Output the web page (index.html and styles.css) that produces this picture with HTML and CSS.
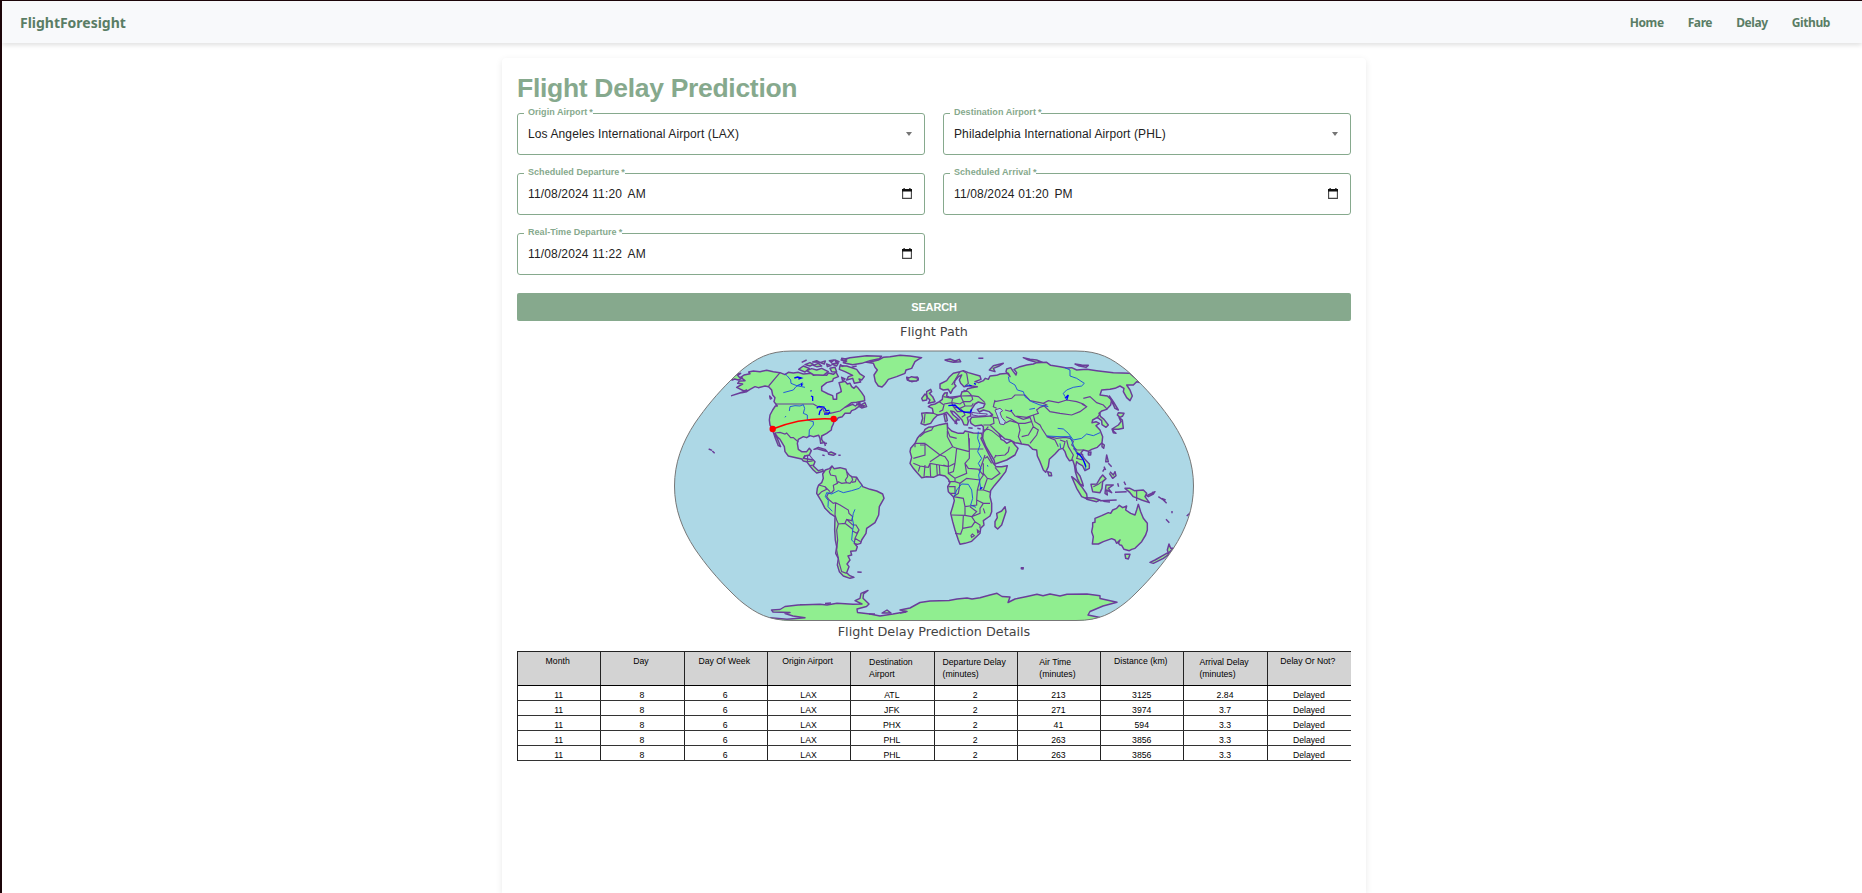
FILE: index.html
```html
<!DOCTYPE html>
<html lang="en">
<head>
<meta charset="utf-8">
<title>FlightForesight</title>
<link rel="stylesheet" href="styles.css">
</head>
<body>
<header class="navbar">
  <a class="brand">FlightForesight</a>
  <nav class="links"><a>Home</a><a>Fare</a><a>Delay</a><a>Github</a></nav>
</header>
<main class="card">
  <h1 class="title">Flight Delay Prediction</h1>
  <form class="form">
    <div class="field"><span class="label">Origin Airport<i>*</i></span><span class="value">Los Angeles International Airport (LAX)</span><span class="caret"></span></div>
    <div class="field"><span class="label">Destination Airport<i>*</i></span><span class="value">Philadelphia International Airport (PHL)</span><span class="caret"></span></div>
    <div class="field date"><span class="label">Scheduled Departure<i>*</i></span><span class="value">11/08/2024 11:20 <b>AM</b></span><svg class="cal" viewBox="0 0 10 11"><path d="M.6 2.500h8.800v7.900H.6z" fill="none" stroke="#444" stroke-width="1.100"/><path d="M0 1h10v2.500H0zM1.500 0h1.200v1.500H1.500zM7.300 0h1.200v1.500H7.300z" fill="#111"/></svg></div>
    <div class="field date"><span class="label">Scheduled Arrival<i>*</i></span><span class="value">11/08/2024 01:20 <b>PM</b></span><svg class="cal" viewBox="0 0 10 11"><path d="M.6 2.500h8.800v7.900H.6z" fill="none" stroke="#444" stroke-width="1.100"/><path d="M0 1h10v2.500H0zM1.500 0h1.200v1.500H1.500zM7.300 0h1.200v1.500H7.300z" fill="#111"/></svg></div>
    <div class="field date"><span class="label">Real-Time Departure<i>*</i></span><span class="value">11/08/2024 11:22 <b>AM</b></span><svg class="cal" viewBox="0 0 10 11"><path d="M.6 2.500h8.800v7.900H.6z" fill="none" stroke="#444" stroke-width="1.100"/><path d="M0 1h10v2.500H0zM1.500 0h1.200v1.500H1.500zM7.300 0h1.200v1.500H7.300z" fill="#111"/></svg></div>
    <button type="button" class="search">SEARCH</button>
  </form>
  <h2 class="caption">Flight Path</h2>
  <svg class="map" viewBox="670 346 528 278">
    <defs>
      <path id="globe" d="M792 351C768 351 756 359 743 369C738 373 734 377 730 381C717 394 706 407 695 423C682 443 674.500 463 674.500 486C674.500 509 682 529 695 549C706 565 717 578 730 591C734 595 738 599 743 603C756 613 768 620.500 792 620.500H1076C1100 620.500 1112 613 1125 603C1130 599 1134 595 1138 591C1151 578 1162 565 1173 549C1186 529 1193.500 509 1193.500 486C1193.500 463 1186 443 1173 423C1162 407 1151 394 1138 381C1134 377 1130 373 1125 369C1112 359 1100 351 1076 351Z"/>
      <clipPath id="clip"><use href="#globe"/></clipPath>
    </defs>
    <use href="#globe" class="ocean"/>
    <g clip-path="url(#clip)">
      <!-- Americas -->
      <g transform="translate(670 280) scale(.33333)">
        <g class="land">
          <path d="M185 347L205 340 218 336 230 330 222 333 200 322 218 312 203 310 208 303 225 302 212 292 222 285 240 281 236 276 250 273 270 275 290 271 310 275 330 278 345 284 355 277 370 279 385 277 400 282 425 280 430 286 445 283 470 286 475 279 490 283 498 276 505 290 490 296 488 303 470 308 455 320 455 332 475 342 488 347 490 358 500 358 500 342 514 335 512 325 507 308 525 304 532 312 540 310 545 320 552 325 558 318 565 325 575 338 583 350 584 362 560 367 545 368 525 382 548 373 556 378 570 367 570 376 585 368 590 380 575 384 567 379 555 388 545 392 540 400 525 400 517 410 505 413 500 420 492 423 490 432 485 442 484 450 470 460 455 468 455 478 461 488 452 490 450 475 446 466 430 470 420 467 410 473 400 470 385 478 382 490 385 508 395 515 410 515 418 505 424 512 418 525 405 528 400 535 430 540 435 545 430 558 445 572 458 568 460 574 440 579 430 570 420 558 410 545 400 543 395 537 378 533 355 528 345 515 343 500 330 478 322 470 315 460 326 485 332 500 325 497 316 475 310 457 308 447 300 435 298 420 300 405 308 390 316 378 322 378 312 365 315 353 308 345 305 330 296 320 285 318 265 323 255 320 240 328 230 335 215 338Z"/>
          <path d="M180 297L200 283 212 280 203 286 208 292 217 294 205 300 194 297 187 300Z"/>
          <path d="M585 246L610 250 615 262 622 270 612 285 616 305 625 318 636 321 645 312 655 298 680 290 705 280 708 270 725 265 735 245 745 238 755 233 720 228 690 226 660 230 640 232 625 240 600 246Z"/>
          <path d="M513 240L540 233 590 227 635 229 628 236 600 242 575 250 548 254 520 248 530 243Z"/>
          <path d="M510 257L530 258 560 268 570 282 583 290 575 300 567 297 572 306 553 310 548 295 530 300 535 290 548 286 525 275 508 268Z"/>
          <path d="M410 272L425 266 440 270 455 265 475 275 460 286 430 284Z"/>
          <path d="M386 268L400 258 418 265 405 276Z"/>
          <path d="M710 292L722 295 742 291 745 300 725 305 712 300Z"/>
          <path d="M405 254L420 248 430 253 420 258ZM430 256L445 250 455 258 440 260ZM428 246L440 242 450 247ZM450 248L466 243 463 252ZM470 252L483 257 472 260ZM478 242L492 240 484 247ZM485 252L505 249 500 258ZM495 240L507 245 498 247ZM515 235L530 238 520 243ZM480 265L495 262 500 276 485 275ZM515 292L525 297 518 303ZM560 372L570 377 578 382 583 377ZM299 348L305 355 301 357ZM116 507L126 511M127 513L134 520M432 508L445 502 465 508 472 515 455 510 440 506ZM475 519L483 516 497 522 490 526 476 523ZM457 525L464 527M505 526L512 526M463 485L466 498M467 488L470 492M510 253L520 260M560 258L545 262M395 247L410 240"/>
        </g>
        <path class="border" d="M330 278L296 318M316 372H430L440 378 458 385 463 396 480 400 490 398 510 393 525 382M315 459L330 457 345 462 350 459 362 473 370 473 385 486M400 535L405 526M413 527L412 545M418 525L430 540M412 545L428 543M418 557L432 555"/>
        <path class="river" d="M345 281L352 288 362 300 363 310 380 317 405 322M398 308L378 320 370 330 340 338M380 317L400 312M358 393L360 380 375 377 390 378 400 374 404 385 400 400 412 405 412 420 430 425 430 435 418 450 417 470M345 412L348 408"/>
        <path class="lake" d="M373 294L383 291 394 294 385 297M395 310V318M422 331L424 334M423 348L428 350 428 363M440 385L447 379 462 381 463 386M447 405L450 393 456 388M465 385L468 392 478 391M462 402L475 402 480 395"/>
        <!-- South America -->
        <g transform="translate(0 510)">
          <g class="land">
            <path d="M458 72L466 60 478 56 486 48 492 56 510 53 528 58 530 65 538 75 545 80 560 82 566 92 575 104 578 110 600 118 620 123 638 132 642 145 628 170 626 195 615 218 590 235 588 250 575 270 572 280 562 283 553 280 562 290 558 302 542 304 545 315 534 318 540 330 531 342 537 350 530 368 538 376 552 382 540 385 520 378 508 365 502 345 505 325 497 310 500 290 496 270 494 240 495 200 480 190 465 175 455 155 440 130 442 115 446 105 455 98 460 85Z"/>
            <path d="M562 366L575 367M465 467L485 465M390 464L420 466"/>
          </g>
          <path class="border" d="M486 48L478 65 482 75 497 78 500 90 502 100 490 106 492 120 485 128 475 130 470 140 478 150 490 160 497 158M530 65L533 80 526 90 530 98 515 100 505 95 502 100M545 80L548 90 540 100 530 98M560 82L556 95 545 97M446 105L465 110 470 118 455 125 445 135M465 110L480 125M497 158L510 165 535 180 537 190 548 200 545 212 530 208 525 220 505 222 500 210 495 195 496 175 497 158M505 222L500 240 503 270 500 300 508 340 515 365 530 370M530 208L548 225 558 225 567 240 560 250 548 243M525 220L548 238M567 240L555 265 572 275M555 265L553 280"/>
          <path class="river" d="M575 106L568 115 545 122 520 128 505 122 485 132 470 128 466 140 475 152 474 170 487 184M555 178L550 190 547 205 551 225 548 240 545 270 553 278"/>
        </g>
      </g>
      <!-- Europe, Africa, Asia, Oceania -->
      <g transform="translate(900 330) scale(.33333)">
        <g class="land">
          <path d="M65 250L80 248 100 250 97 235 85 230 92 225 105 222 118 215 127 208 128 198 134 189 142 188 140 198 150 202 165 200 182 198 186 185 198 184 203 176 215 173 232 170 208 167 192 170 182 160 178 150 185 135 175 140 165 152 163 162 168 168 158 178 152 190 145 178 130 180 120 175 120 162 140 152 147 142 160 130 180 125 190 122 205 128 240 138 243 148 225 155 236 158 250 152 256 145 265 148 270 138 290 136 300 132 325 130 330 140 318 125 320 117 332 113 340 125 348 135 350 128 342 118 360 110 380 105 400 102 410 98 440 97 452 106 480 110 500 114 515 113 530 120 560 118 590 122 615 125 640 128 690 130 722 158 710 155 700 165 680 165 690 180 697 198 690 212 680 203 670 185 672 175 660 168 645 175 630 178 605 180 600 195 622 198 635 210 632 225 620 238 605 243 597 250 602 260 612 268 625 285 618 292 606 284 605 272 592 262 578 270 576 278 588 275 598 280 588 287 600 300 608 320 606 338 592 352 575 358 565 364 550 360 543 368 552 385 568 402 568 415 555 422 548 408 535 400 530 395 527 410 530 425 540 438 548 460 550 468 540 462 532 445 526 425 523 405 518 390 508 392 500 380 495 365 488 355 478 358 465 372 448 388 445 410 437 427 430 420 420 395 412 378 410 360 398 358 385 345 365 342 345 338 330 330 315 327 298 312 303 328 312 332 320 340 335 332 345 345 354 355 345 375 320 390 285 402 282 390 270 370 258 350 248 325 250 300 250 290 245 285 225 288 213 280 210 270 215 262 240 260 270 258 278 255 268 245 250 240 238 246 232 238 250 232 255 222 235 216 225 222 212 242 212 258 202 262 205 275 202 285 192 284 186 270 172 255 162 245 152 243 160 255 178 270 168 270 170 280 162 272 150 258 140 247 128 252 112 256 100 268 92 280 75 285 63 281 68 265Z"/>
          <path d="M85 292L100 290 120 284 142 280 143 292 155 303 175 310 190 310 195 303 220 309 245 310 247 320 243 325 255 350 270 380 280 400 288 410 305 410 322 407 317 425 300 447 283 467 272 482 270 500 275 520 275 545 270 558 250 572 252 585 242 595 240 610 215 634 195 640 180 643 175 630 165 600 158 575 152 550 158 530 163 512 160 500 145 485 143 470 150 458 145 448 135 438 118 434 100 442 80 440 65 443 50 427 40 415 30 400 35 382 30 365 32 355 45 340 52 325 60 315 72 305 75 298Z"/>
          <path d="M315 530L318 545 305 585 293 597 285 590 285 575 292 563 290 550 305 543Z"/>
          <path d="M80 185L92 178 95 185 88 190 98 200 105 215 85 220 90 210 80 200ZM65 205L75 192 82 198 80 210 68 212ZM22 146L35 140 55 145 50 153 28 152Z"/>
          <path d="M443 425L453 428 455 437 447 437ZM515 440L530 452 545 470 560 492 562 507 545 500 530 475ZM558 503L580 504 600 510 590 515 560 508ZM573 463L590 462 600 445 608 435 618 446 608 455 606 475 600 488 578 485ZM618 465L640 465 625 475 635 488 620 480 622 495 615 490ZM620 375L625 395 617 395ZM612 410L617 420M625 400L635 410M630 425L640 435 645 425 648 437 638 445 628 430M608 425L614 415M606 340L613 345 611 355 606 350ZM565 368L573 366 572 375 565 375ZM600 512L650 510M610 514L630 516M653 460L656 470M645 487L680 485M675 475L690 475 703 482 730 480 740 490 735 500 748 518 725 510 700 500 690 488ZM740 497L765 485 760 492 745 500ZM775 500L790 510 800 520M785 505L797 510M816 543V550M798 568L808 578M860 558L872 548M758 485L760 492M672 455L677 465"/>
          <path d="M628 198L640 215 655 240 645 235ZM655 248L672 250 668 258 660 262 652 255ZM657 262L667 270 670 295 655 298 640 297 640 303 648 310 640 308 636 297 655 285 663 275Z"/>
          <path d="M135 90L150 87 165 93 178 88 182 95 160 97 143 93ZM235 85H250M268 120L280 107 310 100 298 108 280 115 285 125ZM370 83L390 88 410 90 428 97 410 97 385 90ZM525 102L545 105 565 106 558 112 535 107ZM132 255L136 275 142 272 138 252ZM163 278L172 282M205 293L218 295M232 295L242 297"/>
          <path d="M578 590L578 578 585 577 585 565 605 557 625 548 632 550 638 540 650 535 658 526 668 533 680 528 677 540 692 550 705 555 710 540 715 523 722 545 730 565 742 580 742 600 737 615 725 635 705 655 695 658 688 662 672 658 665 646 660 645 655 640 660 630 650 640 645 630 635 626 610 635 595 642 577 642 580 620 575 605ZM675 673L690 673 685 687 677 685ZM807 642L812 655 820 655 805 670 802 660ZM750 697L765 690 800 670 808 672 790 685 760 700ZM364 713L370 713 369 717 364 716Z"/>
        </g>
        <path class="border" d="M142 280L142 300 150 320 170 325M100 290L95 300 75 307 60 320M45 340H75V375L40 385M77 342L120 375 90 395M120 375L158 350 142 320 142 303M158 350L170 355 165 400 145 410 130 405M170 355L208 365 205 310M208 325L208 357H250M208 357V385L195 400 205 415 240 418 250 390 255 375M60 345H75M45 340V352M120 375L135 380 145 395 145 410 118 405 90 400 85 412 60 408 40 400M60 408L55 425M75 405L72 440M90 400L92 442M110 405L112 438M118 405L120 436M145 410L145 430 160 425 165 400M145 430L165 445 165 455H145M165 455L180 460 200 445 240 450 250 435 235 418M195 400L200 430 165 445M255 385L262 380 275 400M250 400L250 430 262 445 275 448 300 430 285 412M262 445L250 480 272 487M240 450L232 480 230 510 250 520 270 520M232 480L250 480M180 460L175 490 160 500M160 500L190 505 195 530 230 525 230 510M155 555L195 556 195 530M195 556L215 560 230 545 210 530M190 558L188 595 182 612 165 610M188 595L215 590 225 575 215 560 240 550 240 535 250 520M225 575L240 585 240 595M145 470H165V490L150 490M217 612L223 617 215 622 213 617ZM232 600L238 605 233 608ZM250 535L255 550"/>
        <path class="border" d="M100 250L115 256M118 215L132 225 128 240 118 245M130 200L158 205 155 218 132 222M158 205L182 198 190 215 180 222 155 218M182 198L215 197 218 208 210 215 190 215M190 215L195 228 215 228 220 220M155 218L160 230 180 235 195 228M160 230L172 245 190 245 195 255 185 262M180 235L190 245 212 250M155 165L165 150 180 125M188 122L200 130 205 160 195 168M190 180L205 185 215 197 235 200 255 218M75 252L72 280M270 258L280 262 282 280 270 285 250 285M270 258L278 252M280 262L300 265M270 285L285 300 298 312M250 300L265 298 275 302 300 322M248 310L265 290M285 378L315 375 325 365 328 350M283 385L288 375M285 210L280 230 290 235M285 215L310 210 335 205 345 195 375 195 390 212 420 218 430 220 440 225 420 232 410 240 415 250 400 255 380 262 345 258 335 245 315 240M315 280L330 272 355 280 360 300 355 320 365 342M355 280L375 280 395 275 390 262 370 268 345 258M318 260L335 268 355 280M395 275L400 290 385 315 365 320M400 290L415 300 410 315 390 340M430 220L445 212 475 218 500 210 530 215 550 222 560 230 540 245 515 255 480 250 450 245 430 225M550 205L570 200 590 218 610 225 622 238M560 230L545 222M400 255L405 275 420 285 425 295 440 318 470 325 495 322 510 325 520 335 515 345 530 360 550 360M440 320L465 330 475 350M480 330L495 335 490 355M500 330L505 350 520 375 515 390M520 355L535 370 530 385 548 390M535 370L550 375M710 482V513M580 470L595 463 605 455M592 262L602 250"/>
        <path class="water" d="M285 240L300 235 308 242 300 248 305 262 316 275 312 284 300 282 295 265ZM215 247L235 250 262 252 258 257 235 258 217 255Z"/>
        <path class="river" d="M325 140L328 155 345 165 352 180 370 185 375 200 395 215 420 225 445 230M495 113L510 120 510 138 530 145 553 160 545 168 520 172 500 180 490 190 495 200M388 238L405 235M473 295L490 297 505 310 520 330 545 325 560 312 580 317 600 308M440 318L480 320 510 320 520 345 530 370 545 380 555 400 558 420M480 340L482 355M235 305L233 325 240 345 233 365 245 385 235 400 243 415 236 435 242 475M163 500L170 480 185 462 205 463 215 480 218 505 212 525 228 532M195 168L210 165M262 405L264 410"/>
        <path class="lake" d="M145 227L165 225 180 240 195 247 212 246 215 238M495 205L505 195 500 210M208 165L215 168M222 160L228 163M240 478L247 472M332 240L336 243M530 370L540 375 550 390 558 410"/>
      </g>
      <!-- Antarctica -->
      <path class="land coast" d="M770 617.700L787 619.300 805 617.700 793 616 785 613.500 790 612.500 773 612 771.500 610 780 609.500 785 606.500 798 605 820 604.300 827 605 837 603.300 853 604.300 862 604 855 600.700 860 598.300 861 593.300 868 590.500 863.500 594 863 598.300 869 604 866.500 606.500 857 609 857.500 612.500 870 614 880 616 893 614 907 611.500 900 610 910 608 920 602.500 930 601 949 600.500 957 599 967 598 972 599 980 597.700 990 595 997 593.300 1002 596.500 1010 597 1008 602.500 1015 599 1027 596.500 1037 594.300 1043 595.700 1050 594 1060 596 1067 594.300 1087 594 1100 595.700 1100 598.500 1117 602.300 1103 606 1090 611.500 1088 615 1100 617.500 1085 623H780Z"/>
      <path class="land coast" d="M825 603.500L831 603M882 613L887 610 891 613ZM869 614H875M900 613L906 612"/>
    </g>
    <use href="#globe" class="frame"/>
    <path class="route" d="M772.700 429Q802 417 833.500 419"/>
    <circle class="stop" cx="772.700" cy="429" r="3.200"/><circle class="stop" cx="833.700" cy="419" r="3.200"/>
  </svg>
  <h2 class="caption second">Flight Delay Prediction Details</h2>
  <div class="table">
    <div class="row head"><span>Month</span><span>Day</span><span>Day Of Week</span><span>Origin Airport</span><span class="two">Destination<br>Airport</span><span class="two">Departure Delay<br>(minutes)</span><span class="two">Air Time<br>(minutes)</span><span>Distance (km)</span><span class="two">Arrival Delay<br>(minutes)</span><span>Delay Or Not?</span></div>
    <div class="row"><span>11</span><span>8</span><span>6</span><span>LAX</span><span>ATL</span><span>2</span><span>213</span><span>3125</span><span>2.84</span><span>Delayed</span></div>
    <div class="row"><span>11</span><span>8</span><span>6</span><span>LAX</span><span>JFK</span><span>2</span><span>271</span><span>3974</span><span>3.7</span><span>Delayed</span></div>
    <div class="row"><span>11</span><span>8</span><span>6</span><span>LAX</span><span>PHX</span><span>2</span><span>41</span><span>594</span><span>3.3</span><span>Delayed</span></div>
    <div class="row"><span>11</span><span>8</span><span>6</span><span>LAX</span><span>PHL</span><span>2</span><span>263</span><span>3856</span><span>3.3</span><span>Delayed</span></div>
    <div class="row"><span>11</span><span>8</span><span>6</span><span>LAX</span><span>PHL</span><span>2</span><span>263</span><span>3856</span><span>3.3</span><span>Delayed</span></div>
  </div>
</main>
</body>
</html>
```
FILE: styles.css
```css
* { box-sizing: border-box; }
body { margin: 0; height: 893px; overflow: hidden; background: #fff; border-top: 1px solid #1c0509; border-left: 2px solid #1c0509; font-family: "Liberation Sans", Arial, sans-serif; display: flex; flex-direction: column; }
.navbar { height: 42px; flex: none; display: flex; justify-content: space-between; align-items: center; padding: 0 32px 0 18px; background: #f8f9fb; box-shadow: 0 2px 5px rgba(0,0,0,.13); font-family: "Noto Sans", sans-serif; font-weight: 700; color: #5a7d65; }
.brand { font-size: 14px; letter-spacing: -.02px; }
.links { display: flex; gap: 24px; font-size: 12px; letter-spacing: -.4px; }
.card { width: 864px; margin: 15px 0 0 500px; flex: 1; padding: 15px; background: #fff; border-radius: 4px 4px 0 0; box-shadow: 0 2px 7px rgba(0,0,0,.09); }
.title { margin: 0; height: 40px; line-height: 30px; font-size: 26.500px; letter-spacing: -.3px; color: #86a98d; white-space: nowrap; }
.form { display: grid; grid-template-columns: 408px 408px; gap: 18px; }
.field { position: relative; height: 42px; border: 1px solid #86a98d; border-radius: 3px; display: flex; align-items: center; justify-content: space-between; padding: 0 12px 1px 10px; }
.label { position: absolute; left: 6px; top: -8px; height: 12px; line-height: 12px; padding: 0 0 0 4px; background: #fff; color: #86a98d; font-weight: bold; font-size: 9px; letter-spacing: .04px; white-space: nowrap; }
.label i { font-style: normal; margin-left: 2px; }
.value { font-size: 12px; letter-spacing: .11px; color: #222; white-space: nowrap; }
.value b { font-weight: 400; margin-left: 2px; }
.date .value { letter-spacing: .15px; }
.caret { border: 3.500px solid transparent; border-top: 4px solid #757575; border-bottom: 0; }
.cal { width: 10px; height: 11px; }
.search { grid-column: 1 / 3; height: 28px; padding: 0; border: 0; border-radius: 2px; background: #86a98d; color: #fff; font: bold 11px "Liberation Sans", Arial, sans-serif; letter-spacing: -.15px; }
.caption { margin: 0; height: 25px; text-align: center; font: 400 12.800px/22px "DejaVu Sans", Verdana, sans-serif; color: #444; }
.second { height: 27px; line-height: 15px; }
.map { display: block; width: 528px; height: 278px; margin: 0 auto 0 153px; }
.ocean { fill: #add8e6; }
.frame { fill: none; stroke: #777; stroke-width: 1; }
.land { fill: #90ee90; stroke: #6a3d9a; stroke-width: 4.400; stroke-linejoin: round; }
.coast { stroke-width: 1.450; }
.border { fill: none; stroke: #6a3d9a; stroke-width: 3.500; }
.water { fill: #add8e6; stroke: #6a3d9a; stroke-width: 3; }
.river { fill: none; stroke: #1c4fe0; stroke-width: 2.800; }
.lake { fill: none; stroke: #00f; stroke-width: 4; }
.route { fill: none; stroke: #f00; stroke-width: 1.400; }
.stop { fill: #f00; }
.table { border: 1px solid #222; border-right: 0; border-bottom: 0; font-size: 8.700px; color: #000; }
.row { height: 15px; display: grid; grid-template-columns: repeat(10, 1fr); border-bottom: 1px solid #333; }
.row span { display: flex; justify-content: center; padding: 4px 1px 0 0; line-height: 10px; border-right: 1px solid #222; }
.row span:last-child { border-right: 0; }
.head { height: 34px; background: #d3d3d3; border-bottom-color: #000; }
.head span { padding-right: 3px; }
.head .two { line-height: 12px; }
```
